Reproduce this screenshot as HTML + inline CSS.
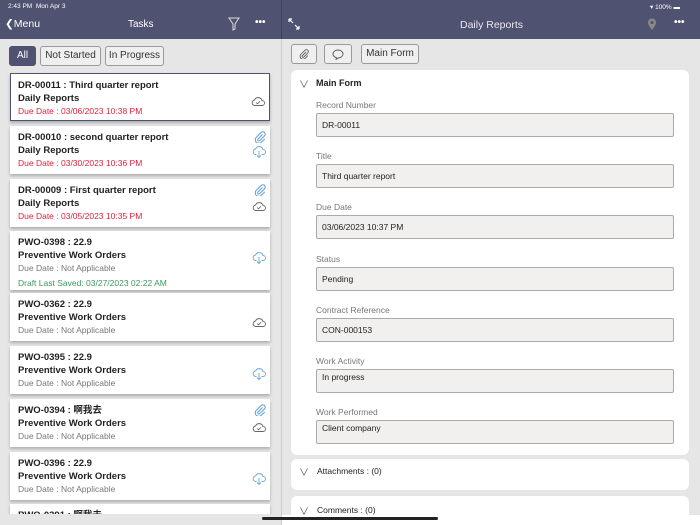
<!DOCTYPE html>
<html><head><style>
*{margin:0;padding:0;box-sizing:border-box}
html,body{width:700px;height:525px;overflow:hidden}
body{font-family:"Liberation Sans","Noto Sans CJK SC",sans-serif;background:#e6e6e6;color:#222}
#w{position:relative;width:700px;height:525px;overflow:hidden}
.hdr{position:absolute;left:0;top:0;width:700px;height:39px;background:#4f5270;color:#fff}
.abs{position:absolute}
.btn{position:absolute;height:20px;border:1px solid #9a9a9a;border-radius:3px;background:#efefef;font-size:10px;color:#333;text-align:center;line-height:18px}
.card{position:absolute;left:10px;width:260px;background:#fff;box-shadow:0 2px 3px rgba(0,0,0,.25);padding:6px 8px;font-size:9.5px;line-height:12.5px}
.card b{font-weight:bold;color:#222;display:block}
.red{color:#e0213a;font-size:8.5px}
.gr{color:#777;font-size:8.5px}
.grn{color:#3a9a5a;font-size:8.5px;margin-top:2px}
.ic{position:absolute;right:4px}
.lbl{position:absolute;left:316px;font-size:8.5px;color:#777}
.inp{position:absolute;left:316px;width:358px;height:24px;border:1px solid #aaa;border-radius:2px;background:#f1f0ef;font-size:8.5px;padding:0 5px;line-height:22px;color:#222}
.pnl{position:absolute;left:291px;width:398px;background:#fff;border-radius:6px}
</style></head><body><div id="w">
<svg width="0" height="0" style="position:absolute"><defs>
<symbol id="cl" viewBox="0 0 14 10"><path d="M3.5 9.5H11A2.5 2.5 0 0 0 11 4.5 4 4 0 0 0 3.5 4 2.8 2.8 0 0 0 3.5 9.5Z" fill="none" stroke="currentColor" stroke-width=".9"/><path d="M5 6.5L6.5 7.8 9 5.3" fill="none" stroke="currentColor" stroke-width=".8"/></symbol>
<symbol id="cd" viewBox="0 0 14 12"><path d="M4.5 8.5H3.5A2.8 2.8 0 0 1 3.5 3 4 4 0 0 1 11 3.5 2.5 2.5 0 0 1 11 8.5H9.5" fill="none" stroke="currentColor" stroke-width=".9"/><path d="M7 5V11.5M5 9.5L7 11.5 9 9.5" fill="none" stroke="currentColor" stroke-width=".9"/></symbol>
<symbol id="pc" viewBox="0 0 12 12"><path d="M8.5 3.5L4 8A1.2 1.2 0 0 0 5.7 9.7L10.5 4.9A2.4 2.4 0 0 0 7.1 1.5L2.3 6.3A3.5 3.5 0 0 0 7.3 11.3L10.8 7.8" fill="none" stroke="currentColor" stroke-width="1"/></symbol>
</defs></svg>
<div class="hdr">
<div class="abs" style="left:8px;top:3px;font-size:6.5px">2:43 PM &nbsp;Mon Apr 3</div>
<div class="abs" style="left:5px;top:18px;font-size:10.5px">❮Menu</div>
<div class="abs" style="left:128px;top:19px;font-size:10px">Tasks</div>
<svg class="abs" style="left:228px;top:17px" width="12" height="14"><path d="M1 1H11L7 7V12L5 13V7Z" fill="none" stroke="#ddd" stroke-width="1"/></svg>
<div class="abs" style="left:255px;top:17px;font-size:10px;font-weight:bold">•••</div>
<div class="abs" style="left:281px;top:0;width:1px;height:39px;background:#3d4060"></div>
<div class="abs" style="left:650px;top:3px;font-size:6.5px">▾ 100% ▬</div>
<svg class="abs" style="left:288px;top:18px" width="12" height="12"><path d="M1 1L5 5M1 1H4M1 1V4M11 11L7 7M11 11H8M11 11V8" stroke="#fff" stroke-width="1.2" fill="none"/></svg>
<div class="abs" style="left:460px;top:19px;font-size:10.5px;color:#e8e8ee">Daily Reports</div>
<svg class="abs" style="left:647px;top:18px" width="10" height="13"><path d="M5 12C2 8 1 6 1 4.5A4 4 0 0 1 9 4.5C9 6 8 8 5 12Z" fill="#888"/><circle cx="5" cy="4.5" r="1.5" fill="#4f5270"/></svg>
<div class="abs" style="left:674px;top:17px;font-size:10px;font-weight:bold">•••</div>
</div>
<div class="abs" style="left:281px;top:39px;width:1px;height:486px;background:#ccc"></div>

<div class="btn" style="left:9px;top:46px;width:27px;background:#4f5270;color:#fff;border-color:#4f5270">All</div>
<div class="btn" style="left:40px;top:46px;width:61px">Not Started</div>
<div class="btn" style="left:105px;top:46px;width:59px">In Progress</div>

<div class="card" style="top:73px;height:48px;border:1px solid #4f5270;padding:6px 7px"><b>DR-00011 : Third quarter report</b><b>Daily Reports</b><div class="red">Due Date : 03/06/2023 10:38 PM</div><svg class="ic" style="top:22px;color:#666" width="14" height="10"><use href="#cl"/></svg></div>
<div class="card" style="top:126px;height:48px"><b>DR-00010 : second quarter report</b><b>Daily Reports</b><div class="red">Due Date : 03/30/2023 10:36 PM</div><svg class="ic" style="top:5px;color:#5b9bd5" width="12" height="12"><use href="#pc"/></svg><svg class="ic" style="top:20px;color:#6aaad8" width="14" height="12"><use href="#cd"/></svg></div>
<div class="card" style="top:179px;height:48px"><b>DR-00009 : First quarter report</b><b>Daily Reports</b><div class="red">Due Date : 03/05/2023 10:35 PM</div><svg class="ic" style="top:5px;color:#5b9bd5" width="12" height="12"><use href="#pc"/></svg><svg class="ic" style="top:22px;color:#666" width="14" height="10"><use href="#cl"/></svg></div>
<div class="card" style="top:231px;height:59px"><b>PWO-0398 : 22.9</b><b>Preventive Work Orders</b><div class="gr">Due Date : Not Applicable</div><div class="grn">Draft Last Saved: 03/27/2023 02:22 AM</div><svg class="ic" style="top:21px;color:#6aaad8" width="14" height="12"><use href="#cd"/></svg></div>
<div class="card" style="top:293px;height:48px"><b>PWO-0362 : 22.9</b><b>Preventive Work Orders</b><div class="gr">Due Date : Not Applicable</div><svg class="ic" style="top:24px;color:#666" width="14" height="10"><use href="#cl"/></svg></div>
<div class="card" style="top:346px;height:48px"><b>PWO-0395 : 22.9</b><b>Preventive Work Orders</b><div class="gr">Due Date : Not Applicable</div><svg class="ic" style="top:22px;color:#6aaad8" width="14" height="12"><use href="#cd"/></svg></div>
<div class="card" style="top:399px;height:48px"><b>PWO-0394 : 啊我去</b><b>Preventive Work Orders</b><div class="gr">Due Date : Not Applicable</div><svg class="ic" style="top:5px;color:#5b9bd5" width="12" height="12"><use href="#pc"/></svg><svg class="ic" style="top:23px;color:#666" width="14" height="10"><use href="#cl"/></svg></div>
<div class="card" style="top:452px;height:48px"><b>PWO-0396 : 22.9</b><b>Preventive Work Orders</b><div class="gr">Due Date : Not Applicable</div><svg class="ic" style="top:21px;color:#6aaad8" width="14" height="12"><use href="#cd"/></svg></div>
<div class="card" style="top:504px;height:30px"><b>PWO-0391 : 啊我去</b></div>
<div class="abs" style="left:0;top:514px;width:281px;height:11px;background:#e6e6e6"></div>
<div class="abs" style="left:282px;top:515px;width:418px;height:10px;background:#fff"></div>
<div class="abs" style="left:262px;top:517px;width:176px;height:3px;border-radius:2px;background:#222"></div>

<div class="btn" style="left:291px;top:44px;width:26px"><svg style="margin-top:4px;color:#555" width="10" height="10" viewBox="0 0 12 12"><use href="#pc"/></svg></div>
<div class="btn" style="left:324px;top:44px;width:28px"><svg style="margin-top:4px" width="12" height="11"><path d="M6 1C9 1 11 2.8 11 5S9 9 6 9L4 10.5 4.3 8.6C2.3 8 1 6.7 1 5 1 2.8 3 1 6 1Z" fill="none" stroke="#555" stroke-width=".9"/></svg></div>
<div class="btn" style="left:361px;top:44px;width:58px">Main Form</div>

<div class="pnl" style="top:70px;height:385px"></div>
<div class="abs" style="left:299px;top:76px;font-size:10px;color:#555">∨</div>
<div class="abs" style="left:316px;top:78px;font-size:9px;font-weight:bold">Main Form</div>
<div class="lbl" style="top:100px">Record Number</div><div class="inp" style="top:113px">DR-00011</div>
<div class="lbl" style="top:151px">Title</div><div class="inp" style="top:164px">Third quarter report</div>
<div class="lbl" style="top:202px">Due Date</div><div class="inp" style="top:215px">03/06/2023 10:37 PM</div>
<div class="lbl" style="top:254px">Status</div><div class="inp" style="top:267px">Pending</div>
<div class="lbl" style="top:305px">Contract Reference</div><div class="inp" style="top:318px">CON-000153</div>
<div class="lbl" style="top:356px">Work Activity</div><div class="inp" style="top:369px;line-height:14px">In progress</div>
<div class="lbl" style="top:407px">Work Performed</div><div class="inp" style="top:420px;line-height:14px">Client company</div>
<div class="pnl" style="top:459px;height:31px"></div>
<div class="abs" style="left:299px;top:464px;font-size:10px;color:#555">∨</div>
<div class="abs" style="left:317px;top:466px;font-size:8.5px">Attachments : (0)</div>
<div class="pnl" style="top:496px;height:19px;border-radius:6px 6px 0 0"></div>
<div class="abs" style="left:299px;top:503px;font-size:10px;color:#555">∨</div>
<div class="abs" style="left:317px;top:505px;font-size:8.5px">Comments : (0)</div>
</div></body></html>
